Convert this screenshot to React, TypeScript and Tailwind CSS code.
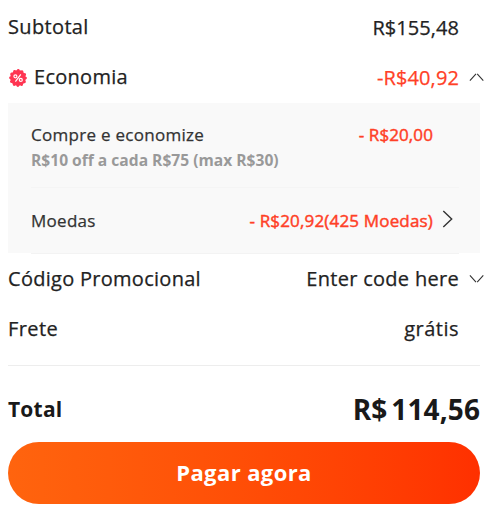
import React from "react";

function Chevron({ up = false }: { up?: boolean }) {
  return (
    <svg width="16" height="10" viewBox="0 0 16 10" fill="none" stroke="#333" strokeWidth="1.1">
      <path d={up ? "M.9 8.6 7 1.8M8.2 1.8 14.3 8.6" : "M.9 1.4 7 8.2M8.2 8.2 14.3 1.4"} />
    </svg>
  );
}

function DiscountBadge() {
  return (
    <svg width="18" height="18" viewBox="0 0 18 18">
      <circle cx="9" cy="9" r="7.9" fill="#ff3552" />
      <circle cx="9" cy="9" r="7.6" fill="none" stroke="#ff3552" strokeWidth="2.6" strokeDasharray="0.1 3.88" strokeLinecap="round" />
      <g fill="none" stroke="#fff" strokeWidth="1.2">
        <circle cx="6.4" cy="7.3" r="1.5" />
        <circle cx="11.8" cy="10.9" r="1.5" />
        <path d="M11.8 5.4 6.4 12.6" />
      </g>
    </svg>
  );
}

export default function App() {
  return (
    <main className="h-[508px] w-[500px] overflow-hidden bg-white pl-2 font-['Open_Sans',sans-serif] text-[20px] leading-[28px] tracking-[0.28px] text-[#222] [-webkit-text-stroke:0.25px_currentColor]">
      <div className="flex h-[52px] w-[451px] items-start justify-between pt-[13px]">
        <span className="tracking-[0.35px]">Subtotal</span>
        <span className="pt-px tracking-[0.05px]">R$155,48</span>
      </div>
      <div className="flex h-[51px] w-[477px] items-start pt-[11px]">
        <span className="mr-[7px] pt-[6px] pl-px"><DiscountBadge /></span>
        <span>Economia</span>
        <span className="ml-auto pt-px tracking-[0.12px] text-[#ff4026]">-R$40,92</span>
        <span className="ml-[10px] pt-[9px]"><Chevron up /></span>
      </div>

      <section className="h-[150px] w-[472px] bg-[#f9f9f9] pr-[21px] pl-[23px] text-[17px] leading-[26px] text-[#333]">
        <div className="h-[85px] border-b border-[#f5f5f5] pt-[19px]">
          <div className="flex justify-between pr-[26px]">
            <span>Compre e economize</span>
            <span className="tracking-[0.1px] text-[#ff4026] [-webkit-text-stroke:0.45px_currentColor]">- R$20,00</span>
          </div>
          <div className="text-[15.6px] leading-[24px] font-bold tracking-normal text-[#999] [-webkit-text-stroke:0]">R$10 off a cada R$75 (max R$30)</div>
        </div>
        <div className="flex h-[66px] items-start border-b border-[#f3f3f3] pt-[20px]">
          <span>Moedas</span>
          <span className="ml-auto tracking-[0.17px] text-[#ff4026] [-webkit-text-stroke:0.45px_currentColor]">- R$20,92(425 Moedas)</span>
          <svg className="mr-[5px] ml-[9px] mt-px" width="12" height="20" viewBox="0 0 12 20" fill="none" stroke="#333" strokeWidth="1.4">
            <path d="M1.3 2 9.7 10 1.3 18" />
          </svg>
        </div>
      </section>

      <div className="flex h-[50px] w-[477px] items-start pt-[12px]">
        <span>Código Promocional</span>
        <span className="ml-auto tracking-[0.3px]">Enter code here</span>
        <span className="ml-[10px] pt-[9px]"><Chevron /></span>
      </div>
      <div className="flex h-[63px] w-[472px] items-start justify-between border-b border-[#ededed] pt-[12px] pr-[21px]">
        <span className="tracking-[0.4px]">Frete</span>
        <span className="tracking-[0.5px]">grátis</span>
      </div>
      <div className="flex h-[76px] w-[472px] items-center justify-between pt-[10px] tracking-normal text-[#191919] [-webkit-text-stroke:0]">
        <span className="text-[21px] font-bold tracking-[0.2px]">Total</span>
        <span className="flex gap-[4px] text-[28px] font-bold tracking-[0.1px]"><span>R$</span><span>114,56</span></span>
      </div>
      <button className="block h-[62px] w-[472px] rounded-full bg-linear-to-r from-[#ff640e] to-[#ff3000] pb-[2px] text-[22px] font-bold tracking-[0.4px] text-white [-webkit-text-stroke:0]">
        Pagar agora
      </button>
    </main>
  );
}
